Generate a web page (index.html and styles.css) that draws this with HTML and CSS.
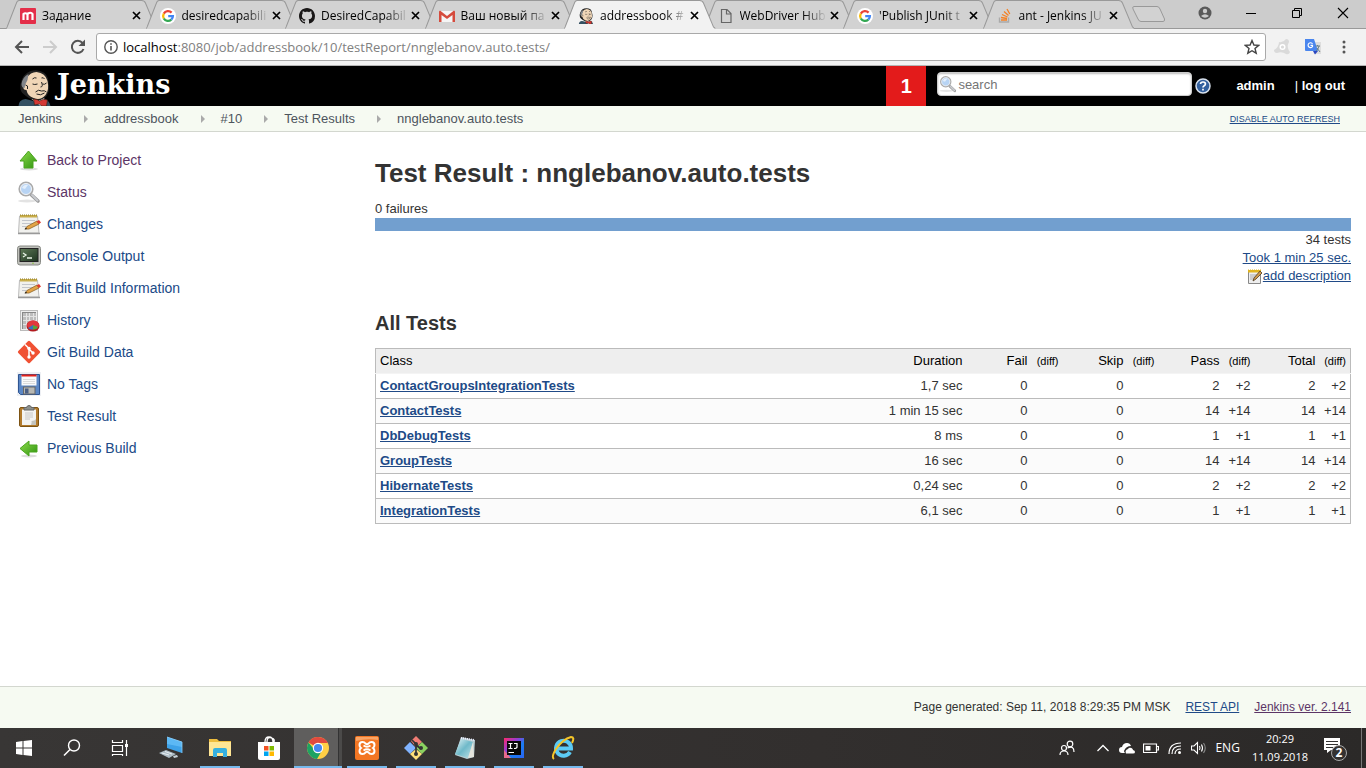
FILE: index.html
```html
<!DOCTYPE html>
<html lang="en">
<head>
<meta charset="utf-8">
<title>addressbook #10 Test Results</title>
<link rel="stylesheet" href="styles.css">
</head>
<body>
<svg class="defs" width="0" height="0" aria-hidden="true">
  <defs>
    <linearGradient id="green" x1="0" y1="0" x2="1" y2="1"><stop offset="0" stop-color="#8fdc4c"/><stop offset="1" stop-color="#2f9410"/></linearGradient>
    <linearGradient id="screen" x1="0" y1="0" x2="1" y2="1"><stop offset="0" stop-color="#5f7a58"/><stop offset="1" stop-color="#1d3320"/></linearGradient>
    <linearGradient id="ij" x1="0" y1="0" x2="1" y2="1"><stop offset="0" stop-color="#fe2a6b"/><stop offset=".35" stop-color="#9a3bd0"/><stop offset=".6" stop-color="#1a7df5"/><stop offset="1" stop-color="#2a64f0"/></linearGradient>
    <linearGradient id="glass" x1="0" y1="0" x2="1" y2="1"><stop offset="0" stop-color="#e6f4f6"/><stop offset=".5" stop-color="#6fb9c9"/><stop offset="1" stop-color="#bfe2e8"/></linearGradient>
    <symbol id="i-tab" viewBox="0 0 151 29" preserveAspectRatio="none">
      <path class="tab-fill" d="M0 29L1 28L10 4Q11 .5 13 .5H135Q138 .5 139 3L149 27L151 29Z"/>
      <path fill="none" stroke="#999" stroke-width="1" d="M0 28.5Q1 28 1.500 26L10 4Q11 .5 13 .5H135Q138 .5 139 3L149 27L151 28.500"/>
    </symbol>
    <symbol id="i-google" viewBox="0 0 16 16">
      <circle cx="8" cy="8" r="8" fill="#fff"/>
      <g fill="none" stroke-width="2.300"><path stroke="#ea4335" d="M3.800 5.600A4.900 4.900 0 0 1 11.600 4.600"/><path stroke="#fbbc05" d="M3.800 5.600A4.900 4.900 0 0 0 3.800 10.500"/><path stroke="#34a853" d="M3.800 10.500A4.900 4.900 0 0 0 11.300 11.700"/><path stroke="#4285f4" d="M11.300 11.700A4.900 4.900 0 0 0 12.900 8.100H8.200"/></g>
    </symbol>
    <symbol id="i-head" viewBox="0 0 32 36">
      <path fill="#335061" d="M0 36Q0 30 7 29L15 31L24 28Q31 30 32 36Z"/>
      <path fill="#222" d="M5 24Q1 21 2 14Q4 4 12 1Q20-1 26 3Q30 7 30 13Q32 20 28 26Q22 33 14 30Q8 27 5 24Z"/>
      <path fill="#f0d6b7" d="M8 8Q12 2 18 2Q27 3 29 11Q31 20 27 25Q22 31 15 28Q9 26 8 20Q4 20 5 16Q7 13 8 8Z"/>
      <path fill="#81858a" d="M3 14Q4 7 10 4L9 10L7 14L6 18Q3 18 3 14Z"/>
      <g fill="none" stroke="#222" stroke-width="1"><path d="M14 9Q16 7 18 8M23 8Q25 7 26 9M14 14Q16 15 19 14M24 14Q26 15 28 13M23 12Q25 17 22 17M17 22Q20 19 23 21Q26 20 28 22M18 24Q22 26 26 23M7 15Q10 15 9 19"/></g>
      <path fill="#fff" d="M13 29L22 36L26 28L20 31Z"/>
      <path fill="#d33833" stroke="#321" stroke-width=".600" d="M15 29Q19 29 21 31Q25 28 29 30L28 36H23L21 34L16 35Z"/>
    </symbol>
    <symbol id="i-x" viewBox="0 0 9 9"><path d="M1 1L8 8M8 1L1 8" fill="none" stroke="currentColor" stroke-width="1.700"/></symbol>
    <symbol id="i-arrow" viewBox="0 0 24 24"><ellipse cx="12" cy="21" rx="9" ry="1.500" fill="#ddd"/><path d="M11.500 3L20 13H16V20H7V13H3Z" fill="url(#green)" stroke="#4aa51e" stroke-linejoin="round"/></symbol>
    <symbol id="i-glass" viewBox="0 0 24 24"><ellipse cx="10" cy="21" rx="9" ry="1.500" fill="#e3e3e3"/><path d="M14.500 15L21 21" stroke="#999" stroke-width="3.500" stroke-linecap="round"/><path d="M15 15L20.500 20.500" stroke="#c9cbd0" stroke-width="2" stroke-linecap="round"/><circle cx="9" cy="9" r="6.700" fill="#b8d4f4" stroke="#aaa" stroke-width="1.800"/><circle cx="9" cy="9" r="5.500" fill="none" stroke="#f4f4f4"/><path d="M5 8Q7 4 11 5L8 9Z" fill="#e3effc"/></symbol>
    <symbol id="i-note" viewBox="0 0 24 24"><path d="M2.500 4H20.500L22 21H1.500Z" fill="#f1f1ee" stroke="#bbb"/><path d="M1 21.500H23" stroke="#999" stroke-width="1.500"/><path d="M3 3H20V5.500H3Z" fill="#c9ae4b"/><path d="M3 3H20" stroke="#8e7a28" stroke-width="1" stroke-dasharray="1 1"/><path d="M5 8.500H18M5 11.500H16M5 14.500H12" stroke="#c3c6cc"/><path d="M8 17L10 14.500L20 9L22 12L12 17Z" fill="#e3a447" stroke="#8f6424" stroke-width=".800"/><path d="M19.500 9.500L22 8L24 10.500L22 12Z" fill="#dd3d2f"/><path d="M7.500 17.500L9 15.500L10 17Z" fill="#222"/></symbol>
    <symbol id="i-pad" viewBox="0 0 16 16"><path d="M1.500 2.500H13.500V15.500H1.500Z" fill="#eee" stroke="#888"/><path d="M1 1.500H14V4.500H1Z" fill="#e0b41f"/><path d="M2 1.500H13" stroke="#fff" stroke-width="1" stroke-dasharray="1 1"/><path d="M3 7H10M3 9H8M3 11H7" stroke="#aaa"/><path d="M6 13L7 10L13 3L15 5L9 11Z" fill="#cf9a4d" stroke="#4e3820" stroke-width=".800"/></symbol>
    <symbol id="i-term" viewBox="0 0 24 24"><rect x=".500" y="2" width="23" height="19" rx="2.500" fill="#bfc0ba" stroke="#888a85"/><rect x="3" y="4.500" width="18" height="13" fill="url(#screen)" stroke="#222"/><path d="M6 9L9 11L6 13M10 14H15" fill="none" stroke="#eaf5e8" stroke-width="1.300"/><circle cx="16" cy="19.300" r=".800" fill="#8ac03c"/></symbol>
    <symbol id="i-chart" viewBox="0 0 24 24"><rect x="3.500" y="2.500" width="17" height="20" fill="#eee" stroke="#bbb"/><rect x="5" y="4" width="14" height="17" fill="#bdbdbd"/><path d="M5 8.500H19M5 12.500H19M5 16.500H19M9.500 4V21M12.500 4V21M16.500 4V21" stroke="#e4e4e4"/><path d="M5.500 4V21M5 4.500H19" stroke="#888"/><ellipse cx="16" cy="18" rx="6.500" ry="5.500" fill="#b3191e"/><ellipse cx="16" cy="17" rx="6" ry="4.500" fill="#e1383d"/><path d="M16 17L11 20Q13 22 16 21.500Z" fill="#3a72bd"/><path d="M16 17V21.500Q20 21.500 21 19Z" fill="#55a83b"/></symbol>
    <symbol id="i-git" viewBox="0 0 24 24"><rect x="3.700" y="3.700" width="16.600" height="16.600" rx="1.500" fill="#f05133" transform="rotate(45 12 12)"/><path d="M8 4.500L12 8.500V17M12 9L16 13" fill="none" stroke="#fff" stroke-width="1.500"/><circle cx="12" cy="8.500" r="1.700" fill="#fff"/><circle cx="12" cy="17" r="1.700" fill="#fff"/><circle cx="16" cy="13" r="1.700" fill="#fff"/></symbol>
    <symbol id="i-disk" viewBox="0 0 24 24"><rect width="24" height="24" fill="#eef0f4"/><path d="M1.500 2.500H22.500V22.500H3.500L1.500 20.500Z" fill="#5b87c5" stroke="#2f5592"/><rect x="4.500" y="3" width="15" height="10.500" fill="#fafafa"/><rect x="4.500" y="2.500" width="15" height="2" fill="#e32119"/><path d="M6 7.500H18M6 9.500H18M6 11.500H18" stroke="#dcdcdc"/><rect x="6.500" y="15" width="11.500" height="7" fill="#b8b8b3" stroke="#666"/><rect x="8" y="16.500" width="3.500" height="5" fill="#4a5f85"/></symbol>
    <symbol id="i-clip" viewBox="0 0 24 24"><rect x="2.500" y="3.500" width="19" height="19" rx="1.500" fill="#b27b2d" stroke="#7d5313"/><path d="M5 5.500H19V21H5Z" fill="#f3f3f1"/><path d="M8 9H16M8 11H16M8 13H16M8 15H13" stroke="#c8c8c8"/><path d="M14 21Q15 18 14.500 17Q18 17 19 15V21Z" fill="#c4c4be"/><path d="M7 6V3.500H9.500Q10 1.500 12 1.500Q14 1.500 14.500 3.500H17V6Z" fill="#8c908c" stroke="#666"/></symbol>
  </defs>
</svg>

<header class="browser">
  <div class="tabstrip">
    <div class="tabs">
      <div class="tab"><svg class="tab-shape"><use href="#i-tab"/></svg><svg class="fav" viewBox="0 0 16 16"><rect width="16" height="16" rx="1" fill="#e42e49"/><path d="M3.500 12V6Q5 4.500 7.500 6V12M7.500 6Q11 3.500 12.500 6V12" fill="none" stroke="#fff" stroke-width="2.200"/></svg><span class="tab-title">Задание</span><button class="close" aria-label="Close tab"><svg><use href="#i-x"/></svg></button></div>
      <div class="tab"><svg class="tab-shape"><use href="#i-tab"/></svg><svg class="fav"><use href="#i-google"/></svg><span class="tab-title">desiredcapabili</span><button class="close" aria-label="Close tab"><svg><use href="#i-x"/></svg></button></div>
      <div class="tab"><svg class="tab-shape"><use href="#i-tab"/></svg><svg class="fav" viewBox="0 0 16 16"><path fill="#191717" d="M8 0C3.580 0 0 3.580 0 8c0 3.540 2.290 6.530 5.470 7.590.4.070.55-.17.55-.38 0-.19-.01-.82-.01-1.490-2.010.37-2.530-.49-2.690-.94-.09-.23-.48-.94-.82-1.130-.28-.15-.68-.52-.01-.53.63-.01 1.080.58 1.230.82.72 1.210 1.870.87 2.330.66.070-.52.28-.87.510-1.070-1.780-.2-3.640-.89-3.640-3.950 0-.87.31-1.590.82-2.150-.08-.2-.36-1.020.08-2.120 0 0 .67-.21 2.200.82.64-.18 1.320-.27 2-.27s1.360.09 2 .27c1.530-1.040 2.200-.82 2.200-.82.44 1.100.16 1.920.08 2.120.51.56.82 1.270.82 2.150 0 3.070-1.870 3.750-3.650 3.950.29.25.54.73.54 1.480 0 1.070-.01 1.930-.01 2.200 0 .21.15.46.55.38A8.010 8.010 0 0 0 16 8c0-4.420-3.580-8-8-8z"/></svg><span class="tab-title">DesiredCapabil</span><button class="close" aria-label="Close tab"><svg><use href="#i-x"/></svg></button></div>
      <div class="tab"><svg class="tab-shape"><use href="#i-tab"/></svg><svg class="fav" viewBox="0 0 16 16"><path fill="#f5f5f5" d="M2 3H14V14H2Z"/><path fill="#d54b3d" d="M1 2.500L8 8L15 2.500L16 3.500V14H13.500V7L8 11L2.500 7V14H0V3.500Z"/></svg><span class="tab-title">Ваш новый па</span><button class="close" aria-label="Close tab"><svg><use href="#i-x"/></svg></button></div>
      <div class="tab active"><svg class="tab-shape"><use href="#i-tab"/></svg><svg class="fav"><use href="#i-head"/></svg><span class="tab-title">addressbook #</span><button class="close" aria-label="Close tab"><svg><use href="#i-x"/></svg></button></div>
      <div class="tab"><svg class="tab-shape"><use href="#i-tab"/></svg><svg class="fav" viewBox="0 0 16 16"><path d="M3.500 1.500H9L13 5.500V14.500H3.500ZM8.500 1.500V6H13" fill="none" stroke="#666" stroke-width="1.200"/></svg><span class="tab-title">WebDriver Hub</span><button class="close" aria-label="Close tab"><svg><use href="#i-x"/></svg></button></div>
      <div class="tab"><svg class="tab-shape"><use href="#i-tab"/></svg><svg class="fav"><use href="#i-google"/></svg><span class="tab-title">'Publish JUnit t</span><button class="close" aria-label="Close tab"><svg><use href="#i-x"/></svg></button></div>
      <div class="tab"><svg class="tab-shape"><use href="#i-tab"/></svg><svg class="fav" viewBox="0 0 16 16"><path d="M2.500 9.500V14H11.500V9.500" fill="none" stroke="#aaa" stroke-width="1.400"/><path d="M4 12H10M4 9.500L10 10.500M5 6.500L10.500 9M7 3.500L11.500 7.500M10 1L12.800 6" stroke="#f48024" stroke-width="1.300"/></svg><span class="tab-title">ant - Jenkins JU</span><button class="close" aria-label="Close tab"><svg><use href="#i-x"/></svg></button></div>
    </div>
    <button class="newtab" aria-label="New tab"><svg viewBox="0 0 36 18"><path d="M3 1.500H26Q28 1.500 29 4L33.500 14Q34 16.500 32 16.500H10Q8 16.500 7 14L2 4Q1 1.500 3 1.500Z" fill="#d2d2d2" stroke="#999"/></svg></button>
    <div class="window-controls">
      <button aria-label="Profile"><svg viewBox="0 0 14 14"><circle cx="7" cy="7" r="6.500" fill="#5a5a5a"/><circle cx="7" cy="5" r="2.200" fill="#ccc"/><path d="M3 10Q7 6.500 11 10Q7 13.500 3 10Z" fill="#ccc"/></svg></button>
      <button aria-label="Minimize"><svg viewBox="0 0 14 14"><path d="M2 7.500H12" stroke="#000"/></svg></button>
      <button aria-label="Restore"><svg viewBox="0 0 14 14"><path d="M2.500 4.500H9.500V11.500H2.500ZM4.500 4.500V2.500H11.500V9.500H9.500" fill="none" stroke="#000"/></svg></button>
      <button aria-label="Close"><svg viewBox="0 0 14 14"><path d="M2 2L12 12M12 2L2 12" stroke="#000" stroke-width="1.100"/></svg></button>
    </div>
  </div>
  <div class="toolbar">
    <button class="nav" aria-label="Back"><svg viewBox="0 0 16 16"><path d="M15 8H2M8 2L2 8L8 14" fill="none" stroke="#555" stroke-width="2"/></svg></button>
    <button class="nav" aria-label="Forward"><svg viewBox="0 0 16 16"><path d="M1 8H14M8 2L14 8L8 14" fill="none" stroke="#ccc" stroke-width="2"/></svg></button>
    <button class="nav" aria-label="Reload"><svg viewBox="0 0 16 16"><path d="M13.500 10A6 6 0 1 1 12.500 4" fill="none" stroke="#555" stroke-width="2"/><path d="M15 .500V7H8.500Z" fill="#555"/></svg></button>
    <div class="omnibox">
      <svg class="info" viewBox="0 0 14 14"><circle cx="7" cy="7" r="6.200" fill="none" stroke="#555" stroke-width="1.400"/><path d="M7 6V10.500M7 3.300V4.800" stroke="#555" stroke-width="1.600"/></svg>
      <div class="url"><span class="host">localhost</span>:8080/job/addressbook/10/testReport/nnglebanov.auto.tests/</div>
      <button class="star" aria-label="Bookmark"><svg viewBox="0 0 16 16"><path d="M8 1.500L9.900 6L14.700 6.400L11 9.500L12.200 14.200L8 11.700L3.800 14.200L5 9.500L1.300 6.400L6.100 6Z" fill="none" stroke="#444" stroke-width="1.400"/></svg></button>
    </div>
    <button class="ext" aria-label="Extension"><svg viewBox="0 0 16 16"><path d="M5 3Q9 4 12 0Q15 0 15 3Q12 8 16 13Q15 16 12 15Q8 12 3 14Q0 14 0 11Q5 8 5 3Z" fill="#dadada"/><circle cx="8.500" cy="8" r="2.300" fill="none" stroke="#fff" stroke-width="1.500"/></svg></button>
    <button class="ext" aria-label="Translate"><svg viewBox="0 0 16 16"><path d="M6 3H16V15H9Z" fill="#dedede"/><path d="M0 0H9L13 12H1Q0 12 0 11Z" fill="#4a86ee"/><path d="M8 12H13L10 15.500Z" fill="#2b46c0"/><path d="M7.500 4.800A2.400 2.400 0 1 0 7.500 7.500V6.300H5.500" fill="none" stroke="#fff" stroke-width="1.200"/><path d="M10.500 7H15M12.500 6V7M14 7Q13 11 11 12M12 9L15 13" fill="none" stroke="#68808a"/></svg></button>
    <button class="ext" aria-label="Menu"><svg viewBox="0 0 16 16"><g fill="#555"><circle cx="8" cy="3" r="1.500"/><circle cx="8" cy="8" r="1.500"/><circle cx="8" cy="13" r="1.500"/></g></svg></button>
  </div>
</header>

<div class="page">
  <header class="page-head">
    <a class="logo" href="#"><svg><use href="#i-head"/></svg><span>Jenkins</span></a>
    <a class="alerts" href="#">1</a>
    <div class="search"><svg><use href="#i-glass"/></svg><input type="text" placeholder="search" aria-label="search"></div>
    <a class="help" href="#" aria-label="Help"><svg viewBox="0 0 16 16"><circle cx="8" cy="8" r="7" fill="#34619f" stroke="#d9e2ee" stroke-width="1.500"/><path d="M5.500 6Q5.700 4 8 4Q10.400 4 10.400 6Q10.400 7.200 8.900 8Q8 8.500 8 9.500M8 10.800V12.500" fill="none" stroke="#fff" stroke-width="1.700"/></svg></a>
    <a class="user" href="#">admin</a>
    <span class="logout">|&nbsp;<a href="#"><b>log out</b></a></span>
  </header>
  <nav class="crumbs">
    <a href="#">Jenkins</a><i class="sep"></i><a href="#">addressbook</a><i class="sep"></i><a href="#">#10</a><i class="sep"></i><a href="#">Test Results</a><i class="sep"></i><a href="#">nnglebanov.auto.tests</a>
    <a class="refresh" href="#">DISABLE AUTO REFRESH</a>
  </nav>
  <div class="columns">
    <nav class="side">
      <a class="visited" href="#"><svg><use href="#i-arrow"/></svg>Back to Project</a>
      <a class="visited" href="#"><svg><use href="#i-glass"/></svg>Status</a>
      <a href="#"><svg><use href="#i-note"/></svg>Changes</a>
      <a href="#"><svg><use href="#i-term"/></svg>Console Output</a>
      <a href="#"><svg><use href="#i-note"/></svg>Edit Build Information</a>
      <a href="#"><svg><use href="#i-chart"/></svg>History</a>
      <a href="#"><svg><use href="#i-git"/></svg>Git Build Data</a>
      <a href="#"><svg><use href="#i-disk"/></svg>No Tags</a>
      <a href="#"><svg><use href="#i-clip"/></svg>Test Result</a>
      <a href="#"><svg viewBox="0 0 24 24"><ellipse cx="12" cy="20" rx="8" ry="1.500" fill="#ddd"/><path d="M3 12.500L12 5V9H20V16H12V20Z" fill="url(#green)" stroke="#4aa51e" stroke-linejoin="round"/></svg>Previous Build</a>
    </nav>
    <main class="main">
      <h1>Test Result : nnglebanov.auto.tests</h1>
      <div class="failures">0 failures</div>
      <div class="bar"></div>
      <div class="summary">
        <div>34 tests</div>
        <div><a href="#">Took 1 min 25 sec.</a></div>
        <div class="describe"><svg><use href="#i-pad"/></svg><a href="#">add description</a></div>
      </div>
      <h2>All Tests</h2>
      <table class="results">
        <colgroup><col><col class="c-dur"><col class="c-num"><col class="c-diff"><col class="c-num"><col class="c-diff"><col class="c-num"><col class="c-diff"><col class="c-num"><col class="c-diff"></colgroup>
        <thead><tr><th>Class</th><th>Duration</th><th>Fail</th><th class="diff">(diff)</th><th>Skip</th><th class="diff">(diff)</th><th>Pass</th><th class="diff">(diff)</th><th>Total</th><th class="diff">(diff)</th></tr></thead>
        <tbody>
          <tr><td><a href="#">ContactGroupsIntegrationTests</a></td><td>1,7 sec</td><td>0</td><td></td><td>0</td><td></td><td>2</td><td>+2</td><td>2</td><td>+2</td></tr>
          <tr><td><a href="#">ContactTests</a></td><td>1 min 15 sec</td><td>0</td><td></td><td>0</td><td></td><td>14</td><td>+14</td><td>14</td><td>+14</td></tr>
          <tr><td><a href="#">DbDebugTests</a></td><td>8 ms</td><td>0</td><td></td><td>0</td><td></td><td>1</td><td>+1</td><td>1</td><td>+1</td></tr>
          <tr><td><a href="#">GroupTests</a></td><td>16 sec</td><td>0</td><td></td><td>0</td><td></td><td>14</td><td>+14</td><td>14</td><td>+14</td></tr>
          <tr><td><a href="#">HibernateTests</a></td><td>0,24 sec</td><td>0</td><td></td><td>0</td><td></td><td>2</td><td>+2</td><td>2</td><td>+2</td></tr>
          <tr><td><a href="#">IntegrationTests</a></td><td>6,1 sec</td><td>0</td><td></td><td>0</td><td></td><td>1</td><td>+1</td><td>1</td><td>+1</td></tr>
        </tbody>
      </table>
    </main>
  </div>
  <footer class="page-foot"><span>Page generated: Sep 11, 2018 8:29:35 PM MSK</span><a href="#">REST API</a><a class="visited" href="#">Jenkins ver. 2.141</a></footer>
</div>

<footer class="taskbar">
  <div class="system">
    <button aria-label="Start"><svg viewBox="0 0 24 24"><path fill="#fff" d="M4 6L10.500 5V11.500H4ZM11.500 5L20 4V11.500H11.500ZM4 12.500H10.500V19L4 18ZM11.500 12.500H20V20L11.500 19Z"/></svg></button>
    <button aria-label="Search"><svg viewBox="0 0 24 24"><circle cx="14" cy="9.500" r="5.500" fill="none" stroke="#fff" stroke-width="1.400"/><path d="M10 13.500L4 19.500" stroke="#fff" stroke-width="1.600"/></svg></button>
    <button aria-label="Task view"><svg viewBox="0 0 24 24"><path d="M4.500 4V6.500H14.500V4M4.500 9.500H14.500V15.500H4.500ZM4.500 20V18.500H14.500V20M18.500 4V20" fill="none" stroke="#fff" stroke-width="1.200"/><rect x="17" y="8" width="3" height="3" fill="#fff"/></svg></button>
  </div>
  <div class="apps">
    <button aria-label="This PC"><svg viewBox="0 0 24 24"><path d="M8 1L23 6V17L8 12Z" fill="#3ea2e8"/><path d="M8 1L23 6V11L8 8Z" fill="#5cb8f4"/><path d="M8 1L23 6V17" fill="none" stroke="#8ccdf8" stroke-width=".800"/><path d="M0 17L7 14L17 18L10 22Z" fill="#aebdc6"/><path d="M3 17L10 19M6 15.500L13 18" stroke="#e9eef2"/><path d="M14 20L18 19L19 21L15 22Z" fill="#c6d2d9"/></svg></button>
    <button class="open" aria-label="File Explorer"><svg viewBox="0 0 24 24"><path d="M1 3H9L11 5H23V20H1Z" fill="#eebd3e"/><path d="M1 6H23V20H1Z" fill="#ffe694"/><path d="M5 21V14Q5 12 7 12H17Q19 12 19 14V21H15V17H9V21Z" fill="#36b0df"/></svg></button>
    <button aria-label="Store"><svg viewBox="0 0 24 24"><path d="M8 6Q8 1 12 1Q16 1 16 6M10 6Q10 0 15 2Q18 3 17 6" fill="none" stroke="#fff" stroke-width="1.300"/><path d="M1 6H23V22Q23 24 21 24H3Q1 24 1 22Z" fill="#fff"/><path fill="#f25022" d="M7 10H11.500V14.500H7Z"/><path fill="#7fba00" d="M12.500 10H17V14.500H12.500Z"/><path fill="#00a4ef" d="M7 15.500H11.500V20H7Z"/><path fill="#ffb900" d="M12.500 15.500H17V20H12.500Z"/></svg></button>
    <button class="open current" aria-label="Chrome"><svg viewBox="0 0 24 24"><circle cx="12" cy="12" r="11" fill="#ffcf45"/><path d="M12 12L2.500 6.500A11 11 0 0 1 21.700 7H12Z" fill="#e04a3f"/><path d="M12 12H7L2.500 6.500A11 11 0 0 0 11 23L16 14.500Z" fill="#1ea263"/><path d="M12 7H21.700L20 5L12 3Z" fill="#e04a3f"/><circle cx="12" cy="12" r="5.200" fill="#fff"/><circle cx="12" cy="12" r="4.100" fill="#4688f1"/></svg></button>
    <button class="open" aria-label="XAMPP"><svg viewBox="0 0 24 24"><rect width="24" height="24" rx="2" fill="#f37623"/><path d="M1 1H23V4Q12 2 1 5Z" fill="#f9a566"/><path d="M10.500 7.500Q9.500 6 7.500 6Q4.500 6 4.500 9Q4.500 11 6 12Q4.500 13 4.500 15Q4.500 18 7.500 18Q9.500 18 10.500 16.500Q12 15 13.500 16.500Q14.500 18 16.500 18Q19.500 18 19.500 15Q19.500 13 18 12Q19.500 11 19.500 9Q19.500 6 16.500 6Q14.500 6 13.500 7.500Q12 9 10.500 7.500Z" fill="none" stroke="#fff" stroke-width="2"/><path d="M8.500 9.500Q12 12 15.500 9.500M8.500 14.500Q12 12 15.500 14.500" fill="none" stroke="#fff" stroke-width="1.800"/></svg></button>
    <button class="open" aria-label="Git"><svg viewBox="0 0 24 24"><path d="M12 0L18 6L12 11L7 5Z" fill="#f07d74"/><path d="M6 6L12 12L6 18L0 12Z" fill="#80b3ff"/><path d="M18 6L24 12L18 18L12 12Z" fill="#8bd160"/><path d="M12 13L18 18L12 24L6 18Z" fill="#ffe07a"/><path d="M8 4L12 8V18M12 9L17 13" fill="none" stroke="#333" stroke-width="1.700"/><circle cx="12" cy="8" r="2" fill="#333"/><circle cx="12" cy="18" r="2" fill="#333"/><circle cx="17" cy="12" r="2" fill="#333"/></svg></button>
    <button class="open" aria-label="Notepad"><svg viewBox="0 0 24 24"><path d="M8 1L22 4L21 21L14 23L2 19Z" fill="#b7cdd3"/><path d="M8 3L20 6L15 22L2 18Z" fill="url(#glass)"/><path d="M8 2L21 4" stroke="#eef" stroke-width="2" stroke-dasharray="1 1"/><path d="M20 6L21 21L15 22Z" fill="#e4e4dc"/></svg></button>
    <button class="open" aria-label="IntelliJ IDEA"><svg viewBox="0 0 24 24"><rect x="2" y="2" width="20" height="20" fill="url(#ij)"/><path d="M2 14L9 22H2Z" fill="#e86a8c"/><rect x="5" y="5" width="14" height="14" fill="#080808"/><path d="M6.500 7.500H10.500M8.500 7.500V12.500M6.500 12.500H10.500M12 7.500H15V11Q15 12.500 12 12.500M6.500 16.500H12" fill="none" stroke="#fff" stroke-width="1.200"/></svg></button>
    <button class="open" aria-label="Internet Explorer"><svg viewBox="0 0 24 24"><path d="M19 16A7.500 7.500 0 1 1 20 12.500H7" fill="none" stroke="#5ccbf5" stroke-width="4"/><path d="M3 23Q0 21 5 13Q12 3 20 1Q24 1 21 7" fill="none" stroke="#f5c629" stroke-width="2"/></svg></button>
  </div>
  <div class="tray">
    <svg class="people" viewBox="0 0 16 16"><g fill="none" stroke="#fff" stroke-width="1.200"><circle cx="5" cy="8" r="2.500"/><path d="M1 15Q1 11 5 11Q9 11 9 15"/><circle cx="11" cy="4" r="2.800"/><path d="M8.500 8Q15 5 15 12"/></g></svg>
    <svg viewBox="0 0 16 16"><path d="M2.500 11L8 5.500L13.500 11" fill="none" stroke="#fff" stroke-width="1.300"/></svg>
    <svg viewBox="0 0 16 16"><path d="M3 13Q0 13 0 10Q0 7 3 7Q4 3 8 3Q11 3 12 6Q7 6 5 11Q5 12 6 13Z" fill="#fff"/><path d="M7 13.500Q5.500 10 9 9Q10 7 12.500 8Q14 9 14 10Q16 10.500 16 12Q16 13.500 14 13.500Z" fill="#fff"/></svg>
    <svg viewBox="0 0 16 16"><path d="M.500 4H13.500V12.500H.500ZM14 6.500H15.500V10H14" fill="none" stroke="#fff" stroke-width="1.200"/><rect x="2.500" y="6" width="5" height="4.500" fill="#fff"/></svg>
    <svg viewBox="0 0 16 16"><g fill="none" stroke="#fff" stroke-width="1.200"><path d="M2 14Q2 3 14 3"/><path d="M5 14Q5 6 14 6"/><path d="M8 14Q8 9 14 9"/></g><circle cx="12.500" cy="12.500" r="1.500" fill="#fff"/></svg>
    <svg viewBox="0 0 16 16"><g fill="none" stroke="#fff" stroke-width="1.100"><path d="M.500 6H3L6.500 2.500V13.500L3 10H.500Z"/><path d="M8.500 6Q9.500 8 8.500 10M10.500 4.500Q12.500 8 10.500 11.500"/><path stroke="#888" d="M12.500 3Q16 8 12.500 13"/></g></svg>
    <span class="lang">ENG</span>
    <div class="clock"><span>20:29</span><span>11.09.2018</span></div>
    <svg class="notice" viewBox="0 0 28 28"><path d="M2 4H18V16H9L5 19V16H2Z" fill="#fff"/><path d="M4 7.500H16M4 10.500H16M4 13.500H11" stroke="#333"/><circle cx="17" cy="19" r="7.500" fill="#343231" stroke="#aaa"/><text x="17" y="23" text-anchor="middle" class="badge">2</text></svg>
  </div>
</footer>
</body>
</html>
```

FILE: styles.css
```css
* { box-sizing: border-box; }
body {
  margin: 0;
  min-height: 100vh;
  display: flex;
  flex-direction: column;
  background: #fff;
  color: #333;
  font: 13px/18px "Liberation Sans", Arial, sans-serif;
}
.defs { position: absolute; }
svg { display: block; flex: none; }
button { padding: 0; border: 0; background: none; color: inherit; font: inherit; display: flex; align-items: center; justify-content: center; }
a { color: #204a87; }
a.visited { color: #5c3566; }

/* browser frame */
.browser { font-family: "Open Sans", "Noto Sans", sans-serif; color: #000; }
.tabstrip { display: flex; height: 29px; background: #ccc; border-bottom: 1px solid #999; padding-left: 6px; }
.tabs { display: flex; flex: 0 1 1116px; height: 29px; min-width: 0; }
.tab { position: relative; flex: 1 1 0; min-width: 0; margin-right: -12px; height: 29px; display: flex; align-items: center; padding: 2px 11px 0 14px; }
.tab-shape { position: absolute; left: 0; top: 0; width: 100%; height: 29px; }
.tab-fill { fill: var(--tab, #d2d2d2); }
.tab.active { z-index: 1; --tab: #f2f2f2; }
.fav { position: relative; width: 16px; height: 16px; }
.tab-title { position: relative; flex: 1; margin-left: 6px; overflow: hidden; white-space: nowrap; font-size: 12px; mask-image: linear-gradient(to right, #000 calc(100% - 24px), transparent); }
.close { position: relative; width: 20px; height: 16px; margin-left: -3px; }
.close svg { width: 9px; height: 9px; }
.newtab { width: 36px; margin-left: 9px; }
.newtab svg { width: 36px; height: 18px; }
.window-controls { display: flex; flex: 1; justify-content: flex-end; }
.window-controls button { width: 46px; padding-bottom: 3px; }
.window-controls svg { width: 14px; height: 14px; }
.toolbar { display: flex; align-items: center; height: 37px; background: #f2f2f2; border-bottom: 1px solid #b5b5b5; padding: 0 14px 0 8px; }
.nav { width: 28px; height: 28px; }
.nav svg, .ext svg, .star svg { width: 16px; height: 16px; }
.omnibox { flex: 1; display: flex; align-items: center; height: 28px; margin: 0 8px 0 4px; padding: 0 5px 0 7px; background: #fff; border: 1px solid #a9a9a9; border-radius: 3px; }
.info { width: 14px; height: 14px; }
.url { flex: 1; margin-left: 5px; font-size: 13px; color: #808080; white-space: nowrap; overflow: hidden; }
.host { color: #000; }
.ext { width: 16px; height: 28px; }
.ext + .ext { margin-left: 15px; }

/* Jenkins */
.page { flex: 1; display: flex; flex-direction: column; }
.page-head { display: flex; align-items: center; height: 40px; background: #000; color: #fff; padding-right: 21px; overflow: hidden; }
.page-head a { color: #fff; text-decoration: none; }
.logo { display: flex; align-items: flex-end; height: 40px; margin: 0 auto 0 18px; }
.logo svg { width: 33px; height: 36px; }
.logo span { margin-left: 6px; font: bold 27px/38px "DejaVu Serif", serif; height: 40px; }
.page-head .alerts { width: 40px; line-height: 40px; text-align: center; background: #e31b1b; font-size: 20px; font-weight: bold; }
.search { display: flex; align-items: center; width: 255px; height: 24px; margin: 0 3px 4px 11px; background: #fff; border: 1px solid #ccc; border-radius: 4px; box-shadow: inset 0 1px 2px #bbb; }
.search svg { width: 18px; height: 18px; margin-left: 1px; }
.search input { flex: 1; min-width: 0; border: 0; padding: 0; margin-left: 1px; background: none; outline: 0; font: 13px "Liberation Sans", Arial, sans-serif; }
.search input::placeholder { color: #757575; }
.help svg { width: 16px; height: 16px; }
.page-head .user { margin: 0 20px 0 25px; font-weight: bold; }
.crumbs { display: flex; align-items: center; height: 26px; padding: 0 26px 0 18px; background: #f6faf2; border-bottom: 1px solid #d3d7cf; }
.crumbs a { color: #4d545d; text-decoration: none; }
.sep { margin: 0 16px 0 22px; border: 4px solid transparent; border-left-color: #aaa; border-right: 0; }
.crumbs .refresh { margin-left: auto; font-size: 9px; color: #204a87; text-decoration: underline; }
.columns { flex: 1; display: flex; }
.side { width: 375px; flex: none; padding: 12px 17px; }
.side a { display: flex; align-items: center; gap: 6px; height: 32px; font-size: 14px; text-decoration: none; }
.side svg { width: 24px; height: 24px; }
.main { flex: 1; min-width: 0; padding: 26px 15px 26px 0; }
h1 { margin: 0 0 12px; font-size: 26px; line-height: 30px; }
h2 { margin: 26px 0 13px; font-size: 20px; line-height: 24px; }
.bar { height: 13px; background: #729fcf; }
.summary { text-align: right; }
.describe { display: flex; justify-content: flex-end; }
.describe svg { width: 16px; height: 18px; }
.results { width: 100%; table-layout: fixed; border-collapse: collapse; border: 1px solid #bbb; }
.results tr { height: 25px; border-bottom: 1px solid #bbb; }
.results thead tr { background: #eee; color: #000; border-bottom: 1px solid #f4f4f4; }
.results tbody tr:nth-child(even) { background: #fbfbfb; }
.results th, .results td { padding: 3px 4px; font-weight: normal; text-align: right; }
.results th:first-child, .results td:first-child { text-align: left; }
.results .diff { font-size: 11px; padding-left: 0; }
.results td a { font-weight: bold; }
.c-dur { width: 82px; }
.c-num { width: 65px; }
.c-diff { width: 31px; }
.results td:nth-child(even) { padding-left: 0; }
.page-foot { display: flex; justify-content: flex-end; align-items: center; gap: 15px; height: 42px; padding: 0 15px 2px 0; background: #f6faf2; border-top: 1px solid #d3d7cf; font-size: 12px; }

/* taskbar */
.taskbar { display: flex; height: 40px; background: linear-gradient(90deg, #383635, #322f2e 60%, #2b2928); color: #fff; font-family: "Open Sans", "Noto Sans", sans-serif; }
.system, .apps { display: flex; }
.system { gap: 8px; padding-left: 4px; }
.apps { gap: 9px; padding-left: 11px; }
.taskbar button { width: 40px; height: 40px; border-bottom: 2px solid transparent; padding-top: 2px; }
.taskbar button svg { width: 24px; height: 24px; }
.taskbar .open { border-color: #76b9ed; }
.taskbar .current { width: 48px; margin: 0 -4px; background: linear-gradient(90deg, #5f5e5d 44px, #333 44px, #333 45px, #4b4a49 45px); }
.tray { display: flex; align-items: center; margin-left: auto; margin-right: 4px; padding-right: 11px; border-right: 1px solid #777; gap: 8px; font-size: 12px; }
.tray svg { width: 16px; height: 16px; }
.tray .people { margin-right: 12px; }
.clock { display: flex; flex-direction: column; align-items: center; margin: 0 6px 0 4px; font-size: 11px; }
.tray .notice { width: 28px; height: 28px; }
.badge { fill: #fff; font-size: 12px; font-weight: bold; }
```
